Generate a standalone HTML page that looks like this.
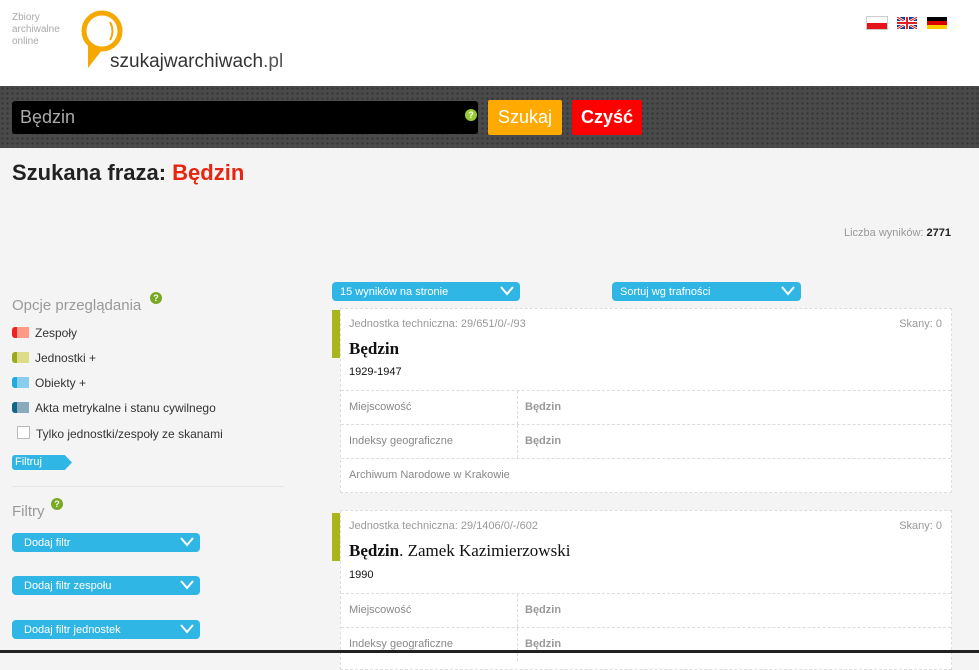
<!DOCTYPE html>
<html><head><meta charset="utf-8"><style>
body{margin:0;width:979px;height:653px;overflow:hidden;background:#f4f4f4;font-family:"Liberation Sans",sans-serif;position:relative}
.a{position:absolute}
.top{left:0;top:0;width:979px;height:86px;background:#fff}
.band{left:0;top:86px;width:979px;height:62px;background:#4a4a4a;background-image:radial-gradient(#333 1px,transparent 1.2px);background-size:5px 5px}
.sel{background:#2fb6e4;color:#fff;font-size:11px;border-radius:4px;height:19px;line-height:20px;padding-left:12px;box-sizing:border-box}
.sel svg{position:absolute;right:6px;top:4px}
.card{background:#fff;border:1px dashed #ddd;box-sizing:border-box}
.row{border-top:1px dashed #ddd;height:33px;font-size:11px;color:#888;line-height:33px;position:relative}
.row span{position:absolute;left:8px}.row b{position:absolute;left:184px;color:#999}
.row i{position:absolute;left:176px;top:0;bottom:0;border-left:1px dashed #ddd}
.leg{left:12px;font-size:12px;color:#333}
.sw{display:inline-block;width:17px;height:11px;vertical-align:-1px;margin-right:6px;border-radius:3px 0 0 3px}
</style></head><body>
<div class="a top"></div>
<div class="a" style="left:12px;top:12px;font-size:10px;line-height:12px;color:#aaa">Zbiory<br>archiwalne<br>online</div>
<svg class="a" style="left:78px;top:8px" width="50" height="62"><circle cx="24" cy="23" r="18" fill="none" stroke="#f6a800" stroke-width="5"/><path d="M10 36 L10 60 L24 42Z" fill="#f6a800"/><path d="M32 14 Q37 23 32 32" stroke="#f6a800" stroke-width="2" fill="none"/></svg>
<div class="a" style="left:110px;top:51px;font-size:19px;color:#333">szukajwarchiwach<span style="color:#555">.pl</span></div>
<div class="a" style="left:867px;top:17px;width:20px;height:12px;background:linear-gradient(#fff 50%,#e4141b 50%);outline:1px solid #ccc"></div>
<svg class="a" style="left:897px;top:17px" width="20" height="12"><rect width="20" height="12" fill="#1c3a8c"/><path d="M0 0L20 12M20 0L0 12" stroke="#fff" stroke-width="2.5"/><path d="M0 0L20 12M20 0L0 12" stroke="#d22" stroke-width="1"/><path d="M10 0V12M0 6H20" stroke="#fff" stroke-width="4"/><path d="M10 0V12M0 6H20" stroke="#d22" stroke-width="2"/></svg>
<div class="a" style="left:927px;top:17px;width:20px;height:12px;background:linear-gradient(#000 33%,#d00 33%,#d00 66%,#fc0 66%)"></div>
<div class="a band"></div>
<div class="a" style="left:12px;top:101px;width:466px;height:33px;background:#000;border-radius:3px;color:#aaa;font-size:18px;line-height:33px;padding-left:8px;box-sizing:border-box">Będzin</div>
<div class="a" style="left:465px;top:109px;width:12px;height:12px;border-radius:6px;background:#9c3;color:#fff;font-size:9px;text-align:center;line-height:12px;font-weight:bold">?</div>
<div class="a" style="left:488px;top:100px;width:74px;height:35px;background:#fa0;color:#fff;font-size:18px;text-align:center;line-height:35px;border-radius:2px">Szukaj</div>
<div class="a" style="left:572px;top:100px;width:70px;height:35px;background:#f00;color:#fff;font-size:18px;font-weight:bold;text-align:center;line-height:35px;border-radius:2px">Czyść</div>
<div class="a" style="left:12px;top:160px;font-size:22px;font-weight:bold;color:#222">Szukana fraza: <span style="color:#e8250f">Będzin</span></div>
<div class="a" style="right:28px;top:227px;font-size:11px;color:#999">Liczba wyników: <b style="color:#222">2771</b></div>
<div class="a" style="left:12px;top:297px;font-size:15px;color:#999">Opcje przeglądania</div>
<div class="a" style="left:150px;top:292px;width:12px;height:12px;border-radius:6px;background:#7a2;color:#fff;font-size:9px;text-align:center;line-height:12px;font-weight:bold">?</div>
<div class="a leg" style="top:326px"><span class="sw" style="background:linear-gradient(90deg,#e22 30%,#f98 30%)"></span>Zespoły</div>
<div class="a leg" style="top:351px"><span class="sw" style="background:linear-gradient(90deg,#9a2 30%,#dd8 30%)"></span>Jednostki +</div>
<div class="a leg" style="top:376px"><span class="sw" style="background:linear-gradient(90deg,#2ad 30%,#8ce 30%)"></span>Obiekty +</div>
<div class="a leg" style="top:401px"><span class="sw" style="background:linear-gradient(90deg,#168 30%,#8ab 30%)"></span>Akta metrykalne i stanu cywilnego</div>
<div class="a leg" style="top:426px"><span class="sw" style="width:11px;height:11px;border:1px solid #bbb;border-radius:0;background:#fff;margin-left:5px"></span>Tylko jednostki/zespoły ze skanami</div>
<div class="a" style="left:12px;top:455px;width:60px;height:15px;background:#2fb6e4;color:#fff;font-size:11px;line-height:15px;padding-left:3px;box-sizing:border-box;clip-path:polygon(0 0,88% 0,100% 50%,88% 100%,0 100%);border-radius:3px 0 0 3px">Filtruj</div>
<div class="a" style="left:12px;top:486px;width:272px;border-top:1px solid #e6e6e6"></div>
<div class="a" style="left:12px;top:503px;font-size:15px;color:#999">Filtry</div>
<div class="a" style="left:51px;top:498px;width:12px;height:12px;border-radius:6px;background:#7a2;color:#fff;font-size:9px;text-align:center;line-height:12px;font-weight:bold">?</div>
<div class="a sel" style="left:12px;top:533px;width:188px">Dodaj filtr<svg width="14" height="10"><path d="M1 1L7 8L13 1" stroke="#fff" stroke-width="2" fill="none"/></svg></div>
<div class="a sel" style="left:12px;top:576px;width:188px">Dodaj filtr zespołu<svg width="14" height="10"><path d="M1 1L7 8L13 1" stroke="#fff" stroke-width="2" fill="none"/></svg></div>
<div class="a sel" style="left:12px;top:620px;width:188px">Dodaj filtr jednostek<svg width="14" height="10"><path d="M1 1L7 8L13 1" stroke="#fff" stroke-width="2" fill="none"/></svg></div>
<div class="a sel" style="left:332px;top:282px;width:188px;padding-left:8px">15 wyników na stronie<svg width="14" height="10"><path d="M1 1L7 8L13 1" stroke="#fff" stroke-width="2" fill="none"/></svg></div>
<div class="a sel" style="left:612px;top:282px;width:189px;padding-left:8px">Sortuj wg trafności<svg width="14" height="10"><path d="M1 1L7 8L13 1" stroke="#fff" stroke-width="2" fill="none"/></svg></div>

<div class="a card" style="left:340px;top:308px;width:612px;height:185px">
<div class="a" style="left:8px;top:9px;font-size:11px;color:#999">Jednostka techniczna: 29/651/0/-/93</div>
<div class="a" style="right:9px;top:9px;font-size:11px;color:#999">Skany: 0</div>
<div class="a" style="left:8px;top:30px;font-size:17px;font-weight:bold;font-family:'Liberation Serif',serif;color:#111">Będzin</div>
<div class="a" style="left:8px;top:57px;font-size:11px;color:#111">1929-1947</div>
<div class="a" style="left:0;right:0;top:81px"><div class="row"><span>Miejscowość</span><i></i><b>Będzin</b></div><div class="row"><span>Indeksy geograficzne</span><i></i><b>Będzin</b></div><div class="row"><span>Archiwum Narodowe w Krakowie</span></div></div>
</div>
<div class="a" style="left:332px;top:310px;width:8px;height:48px;background:#a8b51c"></div>

<div class="a card" style="left:340px;top:510px;width:612px;height:160px">
<div class="a" style="left:8px;top:9px;font-size:11px;color:#999">Jednostka techniczna: 29/1406/0/-/602</div>
<div class="a" style="right:9px;top:9px;font-size:11px;color:#999">Skany: 0</div>
<div class="a" style="left:8px;top:30px;font-size:17px;font-family:'Liberation Serif',serif;color:#111"><b>Będzin</b>. Zamek Kazimierzowski</div>
<div class="a" style="left:8px;top:58px;font-size:11px;color:#111">1990</div>
<div class="a" style="left:0;right:0;top:82px"><div class="row"><span>Miejscowość</span><i></i><b>Będzin</b></div><div class="row"><span>Indeksy geograficzne</span><i></i><b>Będzin</b></div></div>
</div>
<div class="a" style="left:332px;top:513px;width:8px;height:48px;background:#a8b51c"></div>
<div class="a" style="left:0;top:650px;width:979px;height:3px;background:#222"></div>
</body></html>
